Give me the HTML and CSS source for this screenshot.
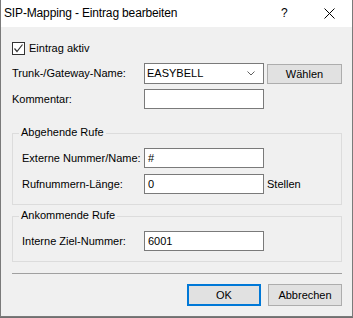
FILE: index.html
```html
<!DOCTYPE html>
<html lang="de">
<head>
    <meta charset="UTF-8">
    <meta name="viewport" content="width=device-width, initial-scale=1.0">
    <title>SIP-Mapping - Eintrag bearbeiten</title>
    <link rel="stylesheet" href="styles.css">
</head>
<body>

    <div class="window">
        <div class="titlebar">
            <span class="title">SIP-Mapping - Eintrag bearbeiten</span>
            <span class="help">?</span>
            <svg class="close" width="11" height="11" viewBox="0 0 11 11">
                <path d="M0.5 0.5 L10.5 10.5 M10.5 0.5 L0.5 10.5" stroke="#000" stroke-width="1" fill="none"/>
            </svg>
        </div>

        <div class="content">
            <div class="check-row">
                <span class="checkbox">
                    <svg width="11" height="11" viewBox="0 0 11 11">
                        <path d="M1.5 5.5 L4 8.5 L9.5 1.5" stroke="#333" stroke-width="1.2" fill="none"/>
                    </svg>
                </span>
                <span>Eintrag aktiv</span>
            </div>

            <div class="row row-trunk">
                <label class="label">Trunk-/Gateway-Name:</label>
                <div class="combo">
                    <span>EASYBELL</span>
                    <svg width="8" height="5" viewBox="0 0 8 5">
                        <path d="M0.5 0.5 L4 4 L7.5 0.5" stroke="#606060" stroke-width="1" fill="none"/>
                    </svg>
                </div>
                <button class="btn btn-choose">Wählen</button>
            </div>

            <div class="row row-comment">
                <label class="label">Kommentar:</label>
                <div class="textbox"></div>
            </div>

            <div class="group group-out">
                <div class="group-title">Abgehende Rufe</div>
                <div class="row">
                    <label class="label">Externe Nummer/Name:</label>
                    <div class="textbox">#</div>
                </div>
                <div class="row row-next">
                    <label class="label">Rufnummern-Länge:</label>
                    <div class="textbox">0</div>
                    <span class="unit">Stellen</span>
                </div>
            </div>

            <div class="group group-in">
                <div class="group-title">Ankommende Rufe</div>
                <div class="row">
                    <label class="label">Interne Ziel-Nummer:</label>
                    <div class="textbox">6001</div>
                </div>
            </div>

            <div class="separator"></div>

            <div class="buttons">
                <button class="btn btn-default">OK</button>
                <button class="btn">Abbrechen</button>
            </div>
        </div>
    </div>

</body>
</html>
```

FILE: styles.css
```css
body {
    margin: 0;
    background-color: #707070;
    font-family: "Liberation Sans", Arial, sans-serif;
    font-size: 11px;
    line-height: 13px;
    color: #000;
}
.window {
    width: 353px;
    height: 317px;
    box-sizing: border-box;
    background-color: #f0f0f0;
    border-left: 1px solid #7a7a7a;
    border-right: 1px solid #7a7a7a;
    border-bottom: 1px solid #7a7a7a;
}
.titlebar {
    height: 27px;
    background-color: #fff;
    display: flex;
    align-items: center;
}
.title {
    font-size: 12px;
    line-height: 27px;
    padding-left: 3px;
    letter-spacing: -0.15px;
    flex: 1;
}
.help {
    font-size: 12px;
    width: 8px;
    margin-right: 35px;
}
.close {
    margin-right: 17px;
}
.content {
    padding: 15px 10px 0 11px;
}
.check-row {
    display: flex;
    align-items: center;
    height: 13px;
}
.checkbox {
    width: 11px;
    height: 11px;
    border: 1px solid #333;
    background-color: #fff;
    margin-right: 4px;
    display: flex;
}
.row {
    display: flex;
    align-items: center;
}
.row-trunk {
    margin-top: 7px;
    height: 23px;
}
.row-comment {
    margin-top: 4px;
}
.row-next {
    margin-top: 6px;
}
.label {
    width: 132px;
    flex-shrink: 0;
}
.textbox {
    width: 112px;
    height: 18px;
    border: 1px solid #7a7a7a;
    background-color: #fff;
    padding: 0 3px;
    line-height: 18px;
}
.combo {
    width: 108px;
    height: 19px;
    border: 1px solid #7a7a7a;
    background-color: #fff;
    display: flex;
    align-items: center;
    justify-content: space-between;
    padding: 0 8px 0 2px;
}
.btn {
    font-family: "Liberation Sans", Arial, sans-serif;
    font-size: 11px;
    width: 74px;
    height: 22px;
    padding: 0;
    background-color: #e1e1e1;
    border: 1px solid #adadad;
    color: #000;
}
.btn-choose {
    width: 75px;
    height: 20px;
    margin-left: 3px;
}
.btn-default {
    border: 2px solid #0078d7;
}
.group {
    border: 1px solid #dcdcdc;
    padding: 0 0 10px 9px;
}
.group .label {
    width: 122px;
}
.group-title {
    display: block;
    width: fit-content;
    margin: -8px 0 9px -3px;
    padding: 0 2px;
    background-color: #f0f0f0;
}
.group-out {
    margin-top: 24px;
}
.group-in {
    margin-top: 11px;
}
.unit {
    margin-left: 3px;
}
.separator {
    margin-top: 11px;
    border-top: 1px solid #a0a0a0;
}
.buttons {
    margin-top: 10px;
    display: flex;
    justify-content: flex-end;
    gap: 7px;
}
```
